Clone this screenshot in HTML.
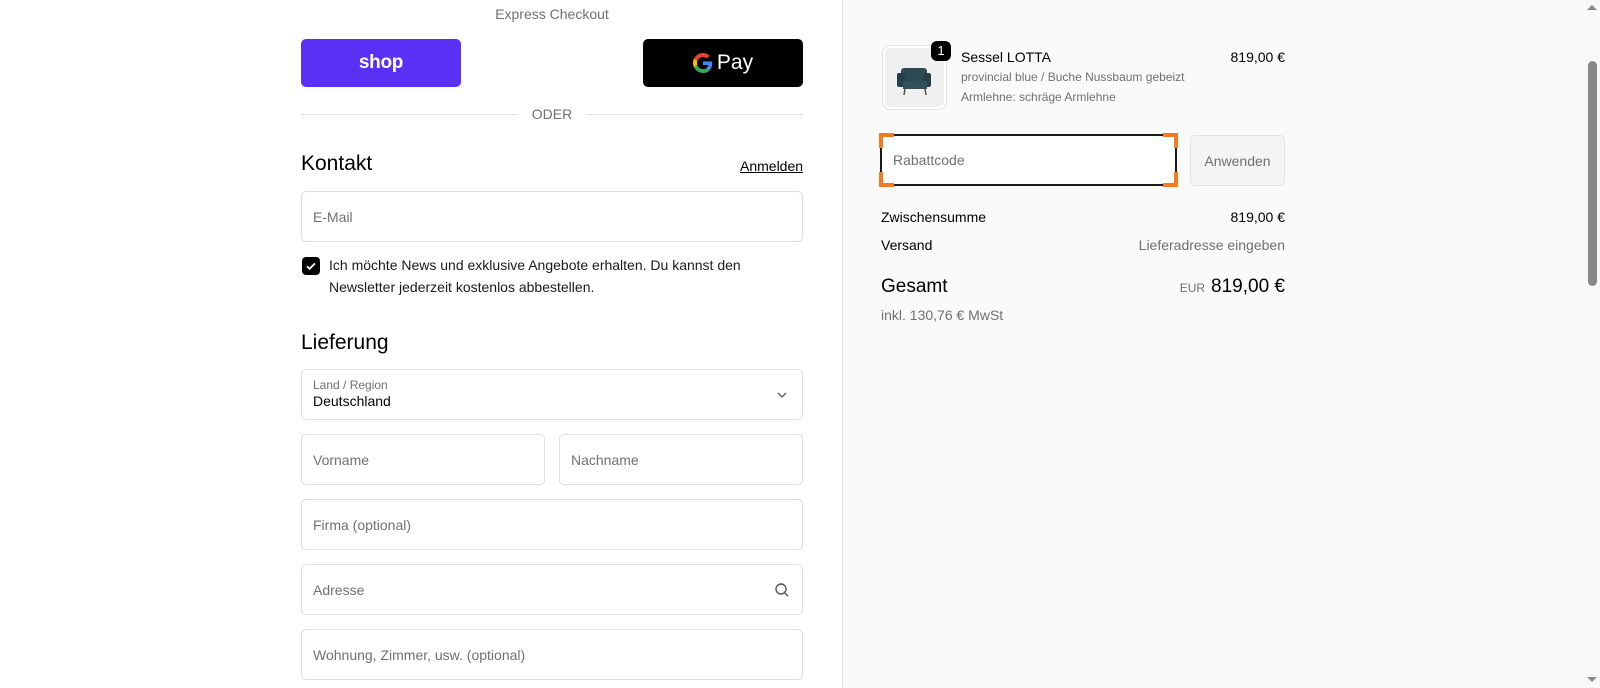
<!DOCTYPE html>
<html><head><meta charset="utf-8"><style>
*{box-sizing:border-box;margin:0;padding:0}
body{width:1600px;height:688px;overflow:hidden;font-family:"Liberation Sans",sans-serif;background:#fff;position:relative;color:#000}
.a{position:absolute}
.in{position:absolute;border:1px solid #dedede;border-radius:5px;background:#fff;font-size:14px;color:#707070;padding-left:11px;display:flex;align-items:center}
</style></head><body>
<div class="a" style="left:842px;top:0;width:758px;height:688px;background:#fafafa;border-left:1px solid #e3e3e3"></div>
<div class="a" style="left:1585px;top:0;width:15px;height:688px;background:#f8f8f8"></div>
<div class="a" style="left:1588px;top:61px;width:9px;height:225px;background:#888;border-radius:5px"></div>
<div class="a" style="left:1587px;top:5px;width:0;height:0;border-left:5px solid transparent;border-right:5px solid transparent;border-bottom:5px solid #888"></div>
<div class="a" style="left:1587px;top:677px;width:0;height:0;border-left:5px solid transparent;border-right:5px solid transparent;border-top:5px solid #888"></div>

<div class="a" style="left:301px;width:502px;top:6px;text-align:center;font-size:14px;color:#707070">Express Checkout</div>
<div class="a" style="left:301px;top:39px;width:160px;height:48px;background:#5a31f4;border-radius:5px;color:#fff;font-weight:bold;font-size:19px;display:flex;align-items:center;justify-content:center;letter-spacing:-0.3px">shop</div>
<div class="a" style="left:643px;top:39px;width:160px;height:48px;background:#000;border-radius:5px;color:#fff;font-size:21px;display:flex;align-items:center;justify-content:center;gap:4px">
<svg width="20" height="20" viewBox="0 0 48 48"><path fill="#EA4335" d="M24 9.5c3.5 0 6.6 1.2 9.1 3.6l6.8-6.8C35.8 2.4 30.3 0 24 0 14.6 0 6.6 5.4 2.6 13.3l7.9 6.1C12.4 13.7 17.7 9.5 24 9.5z"/><path fill="#4285F4" d="M46.1 24.5c0-1.6-.1-3.1-.4-4.5H24v9h12.4c-.5 2.9-2.2 5.3-4.6 7l7.6 5.9c4.4-4.1 6.7-10.1 6.7-17.4z"/><path fill="#FBBC05" d="M10.5 28.6c-.5-1.4-.8-3-.8-4.6s.3-3.2.8-4.6l-7.9-6.1C1 16.6 0 20.2 0 24s1 7.4 2.6 10.7l7.9-6.1z"/><path fill="#34A853" d="M24 48c6.5 0 11.9-2.1 15.9-5.8l-7.6-5.9c-2.1 1.4-4.9 2.3-8.3 2.300-6.3 0-11.6-4.2-13.5-9.9l-7.9 6.1C6.6 42.6 14.6 48 24 48z"/></svg><span>Pay</span></div>
<div class="a" style="left:301px;top:114px;width:217px;height:1px;background:#dedede"></div>
<div class="a" style="left:586px;top:114px;width:217px;height:1px;background:#dedede"></div>
<div class="a" style="left:518px;width:68px;top:106px;text-align:center;font-size:14px;color:#707070">ODER</div>

<div class="a" style="left:301px;top:152px;font-size:21px">Kontakt</div>
<div class="a" style="left:740px;top:158px;font-size:14px;text-decoration:underline;width:63px;text-align:right">Anmelden</div>
<div class="in" style="left:301px;top:191px;width:502px;height:51px">E-Mail</div>
<div class="a" style="left:302px;top:257px;width:18px;height:18px;background:#000;border-radius:4px"><svg width="18" height="18" viewBox="0 0 18 18"><path d="M5 9.2l2.6 2.6L13 6.4" stroke="#fff" stroke-width="1.8" fill="none"/></svg></div>
<div class="a" style="left:329px;top:254px;font-size:14px;line-height:22px;color:#1a1a1a;width:470px">Ich möchte News und exklusive Angebote erhalten. Du kannst den Newsletter jederzeit kostenlos abbestellen.</div>

<div class="a" style="left:301px;top:331px;font-size:21px">Lieferung</div>
<div class="in" style="left:301px;top:369px;width:502px;height:51px;display:block;padding-top:8px">
<div style="font-size:12px;color:#707070">Land / Region</div><div style="font-size:14px;color:#000;margin-top:1px">Deutschland</div>
<svg class="a" style="right:14px;top:20px" width="12" height="10" viewBox="0 0 12 10"><path d="M2 3l4 4 4-4" stroke="#555" stroke-width="1.3" fill="none"/></svg></div>
<div class="in" style="left:301px;top:434px;width:244px;height:51px">Vorname</div>
<div class="in" style="left:559px;top:434px;width:244px;height:51px">Nachname</div>
<div class="in" style="left:301px;top:499px;width:502px;height:51px">Firma (optional)</div>
<div class="in" style="left:301px;top:564px;width:502px;height:51px">Adresse
<svg class="a" style="right:12px;top:17px" width="16" height="16" viewBox="0 0 16 16"><circle cx="7" cy="7" r="5" stroke="#555" stroke-width="1.4" fill="none"/><path d="M10.7 10.7l3.5 3.5" stroke="#555" stroke-width="1.4"/></svg></div>
<div class="in" style="left:301px;top:629px;width:502px;height:51px">Wohnung, Zimmer, usw. (optional)</div>

<div class="a" style="left:882px;top:45px;width:65px;height:65px;border:1px solid #e3e3e3;border-radius:8px;background:#f0f0f0;box-shadow:0 0 0 2px #fff inset">
<svg width="63" height="63" viewBox="0 0 63 63"><rect x="18" y="22" width="26" height="16" rx="3" fill="#2d4a52"/><rect x="14" y="27" width="8" height="14" rx="2" fill="#25404a"/><rect x="40" y="27" width="8" height="14" rx="2" fill="#25404a"/><rect x="20" y="35" width="24" height="8" fill="#2f5058"/><path d="M22 43l-1 6M42 43l1 6" stroke="#6b4a30" stroke-width="1.5"/></svg></div>
<div class="a" style="left:931px;top:41px;width:20px;height:20px;background:#000;border-radius:6px;color:#fff;font-size:13px;text-align:center;line-height:20px">1</div>
<div class="a" style="left:961px;top:49px;font-size:14px">Sessel LOTTA</div>
<div class="a" style="left:961px;top:70px;font-size:12px;color:#707070">provincial blue / Buche Nussbaum gebeizt</div>
<div class="a" style="left:961px;top:90px;font-size:12px;color:#707070">Armlehne: schräge Armlehne</div>
<div class="a" style="left:1185px;top:49px;width:100px;text-align:right;font-size:14px">819,00 €</div>

<div class="in" style="left:880px;top:134px;width:297px;height:52px;border:2px solid #1a1a1a;border-radius:6px">Rabattcode</div>
<div class="a" style="left:879px;top:133px;width:15px;height:4px;background:#f47b20"></div><div class="a" style="left:879px;top:133px;width:4px;height:15px;background:#f47b20"></div>
<div class="a" style="left:1163px;top:133px;width:15px;height:4px;background:#f47b20"></div><div class="a" style="left:1174px;top:133px;width:4px;height:15px;background:#f47b20"></div>
<div class="a" style="left:879px;top:183px;width:15px;height:4px;background:#f47b20"></div><div class="a" style="left:879px;top:172px;width:4px;height:15px;background:#f47b20"></div>
<div class="a" style="left:1163px;top:183px;width:15px;height:4px;background:#f47b20"></div><div class="a" style="left:1174px;top:172px;width:4px;height:15px;background:#f47b20"></div>
<div class="a" style="left:1190px;top:135px;width:95px;height:51px;border:1px solid #e3e3e3;border-radius:5px;background:#f4f4f4;color:#707070;font-size:14px;display:flex;align-items:center;justify-content:center">Anwenden</div>

<div class="a" style="left:881px;top:209px;font-size:14px">Zwischensumme</div>
<div class="a" style="left:1135px;top:209px;width:150px;text-align:right;font-size:14px">819,00 €</div>
<div class="a" style="left:881px;top:237px;font-size:14px">Versand</div>
<div class="a" style="left:1085px;top:237px;width:200px;text-align:right;font-size:14px;color:#707070">Lieferadresse eingeben</div>
<div class="a" style="left:881px;top:276px;font-size:19px">Gesamt</div>
<div class="a" style="left:1085px;top:276px;width:200px;text-align:right;font-size:19px"><span style="font-size:12px;color:#707070;margin-right:6px">EUR</span>819,00 €</div>
<div class="a" style="left:881px;top:307px;font-size:14px;color:#707070">inkl. 130,76 € MwSt</div>
</body></html>
